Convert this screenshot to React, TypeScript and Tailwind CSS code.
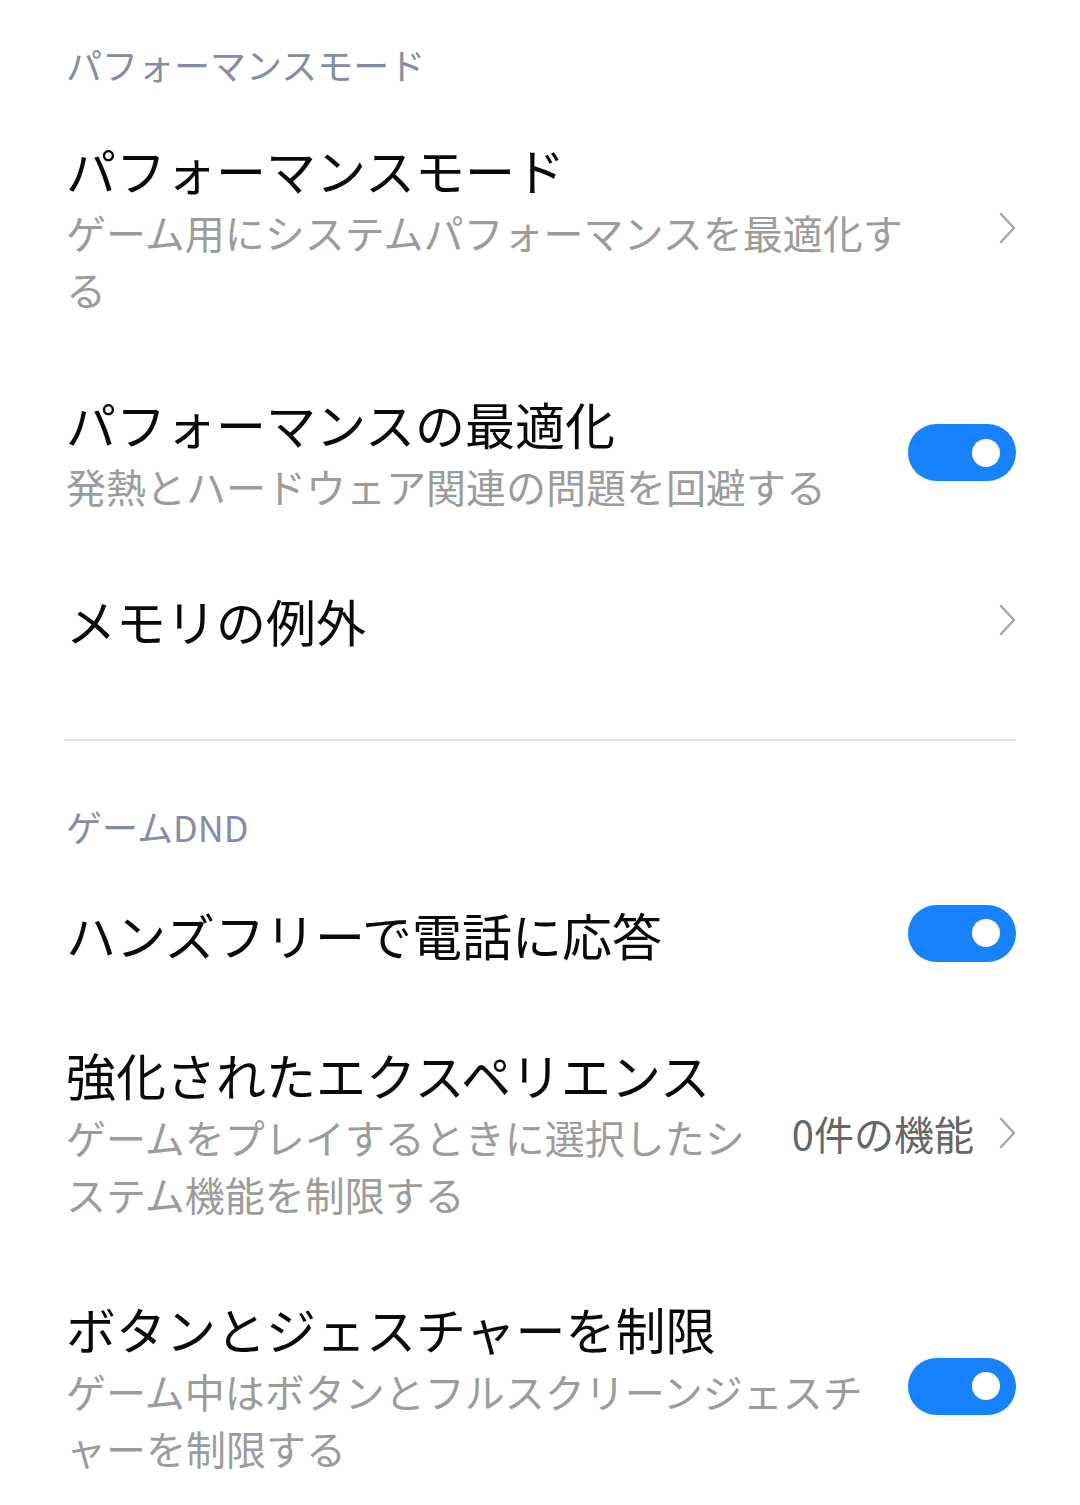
import React from "react";

const font = { fontFamily: '"Noto Sans CJK JP", "Noto Sans", sans-serif' };

function Chevron() {
  return (
    <svg width="18" height="32" viewBox="0 0 18 32" className="shrink-0">
      <polyline points="3,2 16,16 3,30" fill="none" stroke="#a6a6a6" strokeWidth="2.4" strokeLinecap="round" strokeLinejoin="round" />
    </svg>
  );
}

function Toggle() {
  return (
    <div className="shrink-0 w-[108px] h-[57px] rounded-full bg-[#1782fc] flex items-center justify-end pr-[16px] mb-[2px]">
      <div className="w-[28px] h-[28px] rounded-full bg-white" />
    </div>
  );
}

function Header({ children }: { children: React.ReactNode }) {
  return <div className="text-[36px] leading-[48px] text-[#878ca6]">{children}</div>;
}

function Item({
  title,
  sub,
  right,
  tall,
}: {
  title: string;
  sub?: string;
  right: React.ReactNode;
  tall?: boolean;
}) {
  return (
    <div className={tall ? "flex items-center pt-[34px] pb-[44px]" : "flex items-center pt-[34px] pb-[40px]"}>
      <div className="flex-1 min-w-0">
        <div className="text-[50px] leading-[62px] text-[#0a0a0a]">{title}</div>
        {sub && <div className="mt-[4px] text-[40px] leading-[57px] text-[#9c9c9c]">{sub}</div>}
      </div>
      {right}
    </div>
  );
}

export default function App() {
  return (
    <div className="w-[1080px] h-[1505px] bg-white pl-[66px] pr-[64px] pt-[40px] overflow-hidden" style={font}>
      <Header>パフォーマンスモード</Header>
      <div className="mt-[16px]">
        <Item
          title="パフォーマンスモード"
          sub="ゲーム用にシステムパフォーマンスを最適化する"
          right={<div className="ml-[60px]"><Chevron /></div>}
        />
        <Item
          title="パフォーマンスの最適化"
          sub="発熱とハードウェア関連の問題を回避する"
          right={<div className="ml-[24px]"><Toggle /></div>}
        />
        <Item title="メモリの例外" right={<div className="ml-[60px]"><Chevron /></div>} />
      </div>
      <div className="mt-[48px] ml-[-2px] h-[2px] bg-[#e6e6e6]" />
      <div className="mt-[61px]">
        <Header>ゲームDND</Header>
      </div>
      <div className="mt-[19px]">
        <Item tall title="ハンズフリーで電話に応答" right={<div className="ml-[24px]"><Toggle /></div>} />
        <Item
          title="強化されたエクスペリエンス"
          sub="ゲームをプレイするときに選択したシステム機能を制限する"
          right={
            <div className="ml-[24px] flex items-center gap-[24px]">
              <span className="text-[40px] leading-[57px] text-[#666]">0件の機能</span>
              <Chevron />
            </div>
          }
        />
        <Item
          title="ボタンとジェスチャーを制限"
          sub="ゲーム中はボタンとフルスクリーンジェスチャーを制限する"
          right={<div className="ml-[24px]"><Toggle /></div>}
        />
      </div>
    </div>
  );
}
